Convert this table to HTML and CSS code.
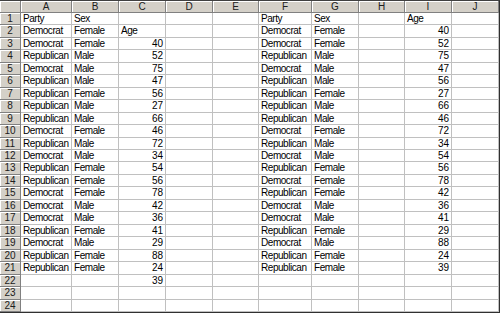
FILE: index.html
```html
<!DOCTYPE html>
<html>
<head>
<meta charset="utf-8">
<link rel="stylesheet" href="styles.css">
</head>
<body>
<div class="sheet">
<div class="corner"></div><div class="col">A</div><div class="col">B</div><div class="col">C</div><div class="col">D</div><div class="col">E</div><div class="col">F</div><div class="col">G</div><div class="col">H</div><div class="col">I</div><div class="col">J</div>
<div class="row">1</div><div class="cell">Party</div><div class="cell">Sex</div><div class="cell"></div><div class="cell"></div><div class="cell"></div><div class="cell">Party</div><div class="cell">Sex</div><div class="cell"></div><div class="cell">Age</div><div class="cell"></div>
<div class="row">2</div><div class="cell">Democrat</div><div class="cell">Female</div><div class="cell">Age</div><div class="cell"></div><div class="cell"></div><div class="cell">Democrat</div><div class="cell">Female</div><div class="cell"></div><div class="cell num">40</div><div class="cell"></div>
<div class="row">3</div><div class="cell">Democrat</div><div class="cell">Female</div><div class="cell num">40</div><div class="cell"></div><div class="cell"></div><div class="cell">Democrat</div><div class="cell">Female</div><div class="cell"></div><div class="cell num">52</div><div class="cell"></div>
<div class="row">4</div><div class="cell">Republican</div><div class="cell">Male</div><div class="cell num">52</div><div class="cell"></div><div class="cell"></div><div class="cell">Republican</div><div class="cell">Male</div><div class="cell"></div><div class="cell num">75</div><div class="cell"></div>
<div class="row">5</div><div class="cell">Democrat</div><div class="cell">Male</div><div class="cell num">75</div><div class="cell"></div><div class="cell"></div><div class="cell">Democrat</div><div class="cell">Male</div><div class="cell"></div><div class="cell num">47</div><div class="cell"></div>
<div class="row">6</div><div class="cell">Republican</div><div class="cell">Male</div><div class="cell num">47</div><div class="cell"></div><div class="cell"></div><div class="cell">Republican</div><div class="cell">Male</div><div class="cell"></div><div class="cell num">56</div><div class="cell"></div>
<div class="row">7</div><div class="cell">Republican</div><div class="cell">Female</div><div class="cell num">56</div><div class="cell"></div><div class="cell"></div><div class="cell">Republican</div><div class="cell">Female</div><div class="cell"></div><div class="cell num">27</div><div class="cell"></div>
<div class="row">8</div><div class="cell">Republican</div><div class="cell">Male</div><div class="cell num">27</div><div class="cell"></div><div class="cell"></div><div class="cell">Republican</div><div class="cell">Male</div><div class="cell"></div><div class="cell num">66</div><div class="cell"></div>
<div class="row">9</div><div class="cell">Republican</div><div class="cell">Male</div><div class="cell num">66</div><div class="cell"></div><div class="cell"></div><div class="cell">Republican</div><div class="cell">Male</div><div class="cell"></div><div class="cell num">46</div><div class="cell"></div>
<div class="row">10</div><div class="cell">Democrat</div><div class="cell">Female</div><div class="cell num">46</div><div class="cell"></div><div class="cell"></div><div class="cell">Democrat</div><div class="cell">Female</div><div class="cell"></div><div class="cell num">72</div><div class="cell"></div>
<div class="row">11</div><div class="cell">Republican</div><div class="cell">Male</div><div class="cell num">72</div><div class="cell"></div><div class="cell"></div><div class="cell">Republican</div><div class="cell">Male</div><div class="cell"></div><div class="cell num">34</div><div class="cell"></div>
<div class="row">12</div><div class="cell">Democrat</div><div class="cell">Male</div><div class="cell num">34</div><div class="cell"></div><div class="cell"></div><div class="cell">Democrat</div><div class="cell">Male</div><div class="cell"></div><div class="cell num">54</div><div class="cell"></div>
<div class="row">13</div><div class="cell">Republican</div><div class="cell">Female</div><div class="cell num">54</div><div class="cell"></div><div class="cell"></div><div class="cell">Republican</div><div class="cell">Female</div><div class="cell"></div><div class="cell num">56</div><div class="cell"></div>
<div class="row">14</div><div class="cell">Republican</div><div class="cell">Female</div><div class="cell num">56</div><div class="cell"></div><div class="cell"></div><div class="cell">Democrat</div><div class="cell">Female</div><div class="cell"></div><div class="cell num">78</div><div class="cell"></div>
<div class="row">15</div><div class="cell">Democrat</div><div class="cell">Female</div><div class="cell num">78</div><div class="cell"></div><div class="cell"></div><div class="cell">Republican</div><div class="cell">Female</div><div class="cell"></div><div class="cell num">42</div><div class="cell"></div>
<div class="row">16</div><div class="cell">Democrat</div><div class="cell">Male</div><div class="cell num">42</div><div class="cell"></div><div class="cell"></div><div class="cell">Democrat</div><div class="cell">Male</div><div class="cell"></div><div class="cell num">36</div><div class="cell"></div>
<div class="row">17</div><div class="cell">Democrat</div><div class="cell">Male</div><div class="cell num">36</div><div class="cell"></div><div class="cell"></div><div class="cell">Democrat</div><div class="cell">Male</div><div class="cell"></div><div class="cell num">41</div><div class="cell"></div>
<div class="row">18</div><div class="cell">Republican</div><div class="cell">Female</div><div class="cell num">41</div><div class="cell"></div><div class="cell"></div><div class="cell">Republican</div><div class="cell">Female</div><div class="cell"></div><div class="cell num">29</div><div class="cell"></div>
<div class="row">19</div><div class="cell">Democrat</div><div class="cell">Male</div><div class="cell num">29</div><div class="cell"></div><div class="cell"></div><div class="cell">Democrat</div><div class="cell">Male</div><div class="cell"></div><div class="cell num">88</div><div class="cell"></div>
<div class="row">20</div><div class="cell">Republican</div><div class="cell">Female</div><div class="cell num">88</div><div class="cell"></div><div class="cell"></div><div class="cell">Republican</div><div class="cell">Female</div><div class="cell"></div><div class="cell num">24</div><div class="cell"></div>
<div class="row">21</div><div class="cell">Republican</div><div class="cell">Female</div><div class="cell num">24</div><div class="cell"></div><div class="cell"></div><div class="cell">Republican</div><div class="cell">Female</div><div class="cell"></div><div class="cell num">39</div><div class="cell"></div>
<div class="row">22</div><div class="cell"></div><div class="cell"></div><div class="cell num">39</div><div class="cell"></div><div class="cell"></div><div class="cell"></div><div class="cell"></div><div class="cell"></div><div class="cell"></div><div class="cell"></div>
<div class="row">23</div><div class="cell"></div><div class="cell"></div><div class="cell"></div><div class="cell"></div><div class="cell"></div><div class="cell"></div><div class="cell"></div><div class="cell"></div><div class="cell"></div><div class="cell"></div>
<div class="row">24</div><div class="cell"></div><div class="cell"></div><div class="cell"></div><div class="cell"></div><div class="cell"></div><div class="cell"></div><div class="cell"></div><div class="cell"></div><div class="cell"></div><div class="cell"></div>
</div>
</body>
</html>
```
FILE: styles.css
```css
html, body {
  margin: 0;
  padding: 0;
  background: #ffffff;
}
.sheet {
  width: 500px;
  height: 313px;
  box-sizing: border-box;
  border-top: 1px solid #404040;
  border-right: 1px solid #303030;
  border-bottom: 1px solid #303030;
  display: grid;
  grid-template-columns: 21px 51px 47px 47px 47px 46px 53px 47px 46px 47px 47px;
  grid-template-rows: 12px repeat(24, minmax(0, 1fr));
  font-family: "Liberation Sans", Arial, sans-serif;
  font-size: 10px;
  color: #000;
  overflow: hidden;
}
.cell {
  border-right: 1px solid #c0c0c0;
  border-bottom: 1px solid #c0c0c0;
  padding: 0 2px;
  line-height: 12px;
  letter-spacing: -0.45px;
  white-space: nowrap;
  overflow: hidden;
}
.num {
  text-align: right;
  letter-spacing: 0;
}
.corner, .col, .row {
  background: #d4d0c8;
  border-right: 1px solid #808080;
  border-bottom: 1px solid #808080;
  box-shadow: inset 1px 1px 0 #ffffff;
  text-align: center;
  line-height: 11px;
  font-size: 10px;
  color: #202020;
  overflow: hidden;
}
.row {
  line-height: 12px;
}
```
